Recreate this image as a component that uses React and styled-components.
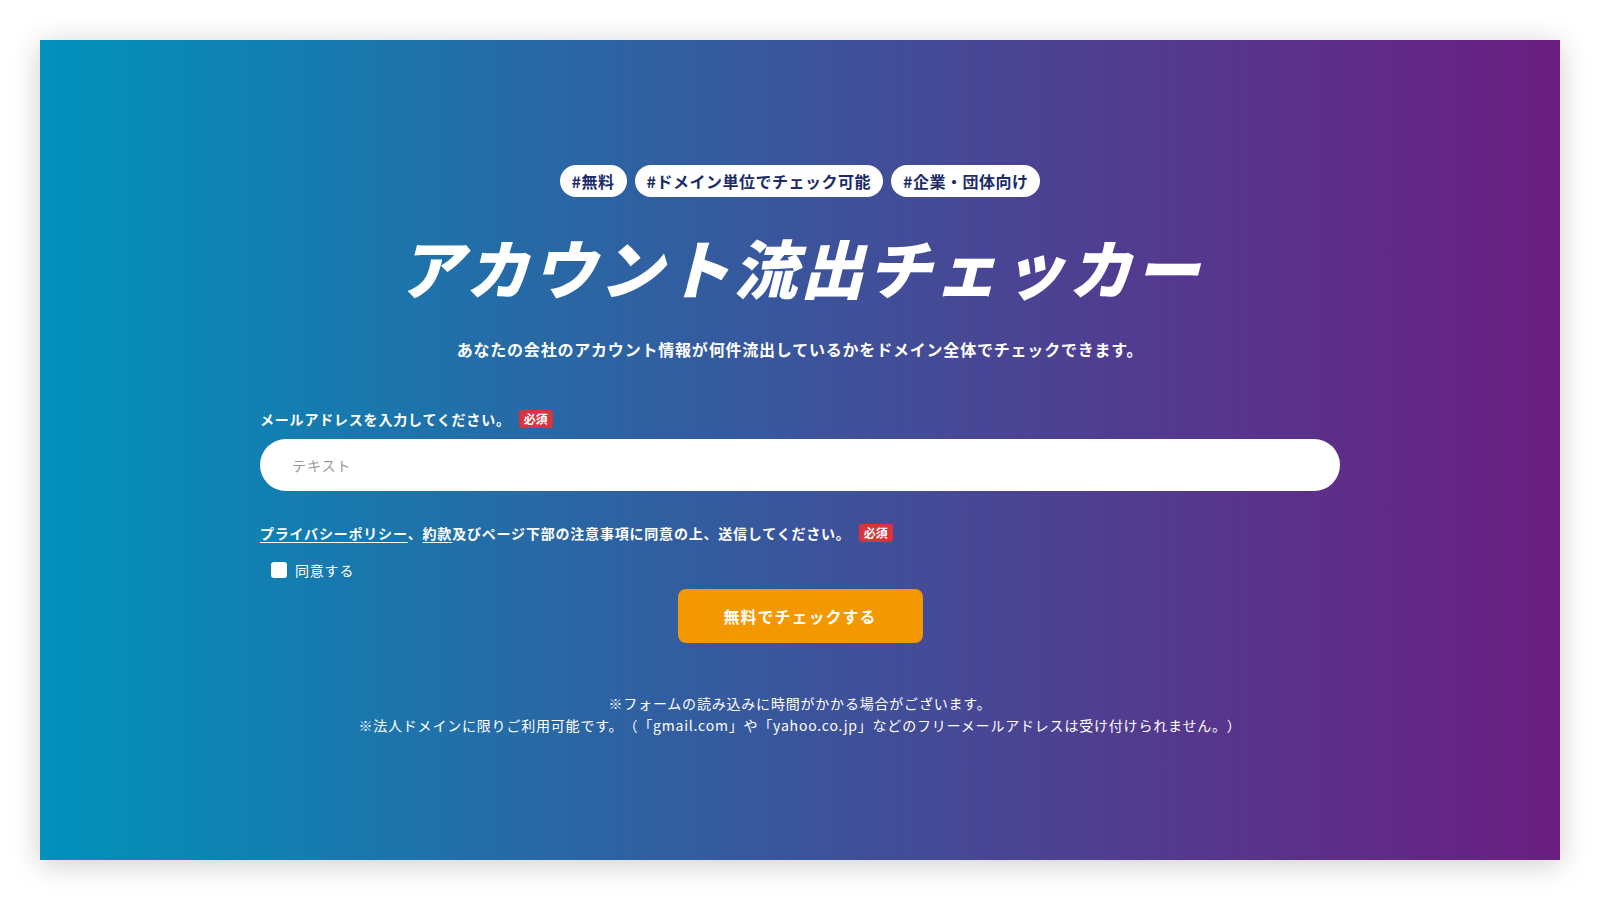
import React from "react"
import styled, { createGlobalStyle } from "styled-components"

const GlobalStyle = createGlobalStyle`
  html, body {
    margin: 0;
    padding: 0;
    background: #ffffff;
  }
  body {
    font-family: "Noto Sans CJK JP", "Noto Sans", sans-serif;
    text-spacing-trim: space-all;
  }
`

const Page = styled.div`
  width: 1600px;
  height: 900px;
  box-sizing: border-box;
  padding: 40px;
`

const Panel = styled.section`
  height: 820px;
  background: linear-gradient(to right, #0092bb 0%, #2a66a4 35%, #4b4393 65%, #6b1e81 100%);
  box-shadow: 0 4px 28px rgba(0, 0, 0, 0.2);
  display: flex;
  flex-direction: column;
  align-items: center;
  padding-top: 125px;
  box-sizing: border-box;
  color: #fff;
`

const Tags = styled.ul`
  display: flex;
  gap: 8px;
  margin: 0;
  padding: 0;
  list-style: none;
`

const Tag = styled.li`
  height: 32px;
  line-height: 32px;
  padding: 0 12px;
  border-radius: 16px;
  background: #fff;
  color: #1a2b68;
  font-size: 16px;
  font-weight: 700;
  letter-spacing: 0.5px;
`

const Title = styled.h1`
  margin: 31px 0 0;
  font-size: 64px;
  font-weight: 900;
  font-style: italic;
  letter-spacing: 3px;
  line-height: 1.2;
`

const Lead = styled.p`
  margin: 32px 0 0;
  font-size: 16px;
  font-weight: 700;
  letter-spacing: 0.8px;
`

const Form = styled.form`
  width: 1080px;
  margin-top: 48px;
  display: flex;
  flex-direction: column;
`

const Label = styled.div`
  display: flex;
  align-items: center;
  font-size: 14px;
  font-weight: 700;
  letter-spacing: 0.8px;
  a {
    color: #fff;
    text-decoration: underline;
    text-underline-offset: 3px;
  }
`

const Required = styled.span`
  margin-left: 8px;
  padding: 0 5px;
  height: 18px;
  line-height: 18px;
  border-radius: 3px;
  background: #d8343e;
  color: #fff;
  font-size: 12px;
  font-weight: 700;
  letter-spacing: 0;
`

const Input = styled.input`
  margin-top: 10px;
  height: 52px;
  border: none;
  border-radius: 26px;
  background: #fff;
  padding: 0 32px;
  font-family: inherit;
  font-size: 14px;
  letter-spacing: 1px;
  outline: none;
  &::placeholder {
    color: #9a9a9a;
  }
`

const Gap = styled.div`
  height: ${p => p.h}px;
`

const CheckRow = styled.label`
  display: flex;
  align-items: center;
  gap: 8px;
  margin: 17px 0 0 11px;
  font-size: 14px;
  letter-spacing: 0.8px;
`

const Box = styled.span`
  width: 16px;
  height: 16px;
  border-radius: 3px;
  background: #fff;
`

const Button = styled.button`
  align-self: center;
  margin-top: 9px;
  width: 245px;
  height: 54px;
  border: none;
  border-radius: 8px;
  background: #f39800;
  color: #fff;
  font-family: inherit;
  font-size: 16px;
  font-weight: 700;
  letter-spacing: 1px;
`

const Notes = styled.div`
  margin-top: 49px;
  text-align: center;
  font-size: 14px;
  line-height: 22px;
  letter-spacing: 0.8px;
`

export default function App() {
  return (
    <>
      <GlobalStyle />
      <Page>
        <Panel>
          <Tags>
            <Tag>#無料</Tag>
            <Tag>#ドメイン単位でチェック可能</Tag>
            <Tag>#企業・団体向け</Tag>
          </Tags>
          <Title>アカウント流出チェッカー</Title>
          <Lead>あなたの会社のアカウント情報が何件流出しているかをドメイン全体でチェックできます。</Lead>
          <Form onSubmit={e => e.preventDefault()}>
            <Label>
              メールアドレスを入力してください。
              <Required>必須</Required>
            </Label>
            <Input placeholder="テキスト" />
            <Gap h={32} />
            <Label>
              <a>プライバシーポリシー</a>、<a>約款</a>及びページ下部の注意事項に同意の上、送信してください。
              <Required>必須</Required>
            </Label>
            <CheckRow>
              <Box />
              同意する
            </CheckRow>
            <Button type="submit">無料でチェックする</Button>
          </Form>
          <Notes>
            ※フォームの読み込みに時間がかかる場合がございます。
            <br />
            ※法人ドメインに限りご利用可能です。（「gmail.com」や「yahoo.co.jp」などのフリーメールアドレスは受け付けられません。）
          </Notes>
        </Panel>
      </Page>
    </>
  )
}
